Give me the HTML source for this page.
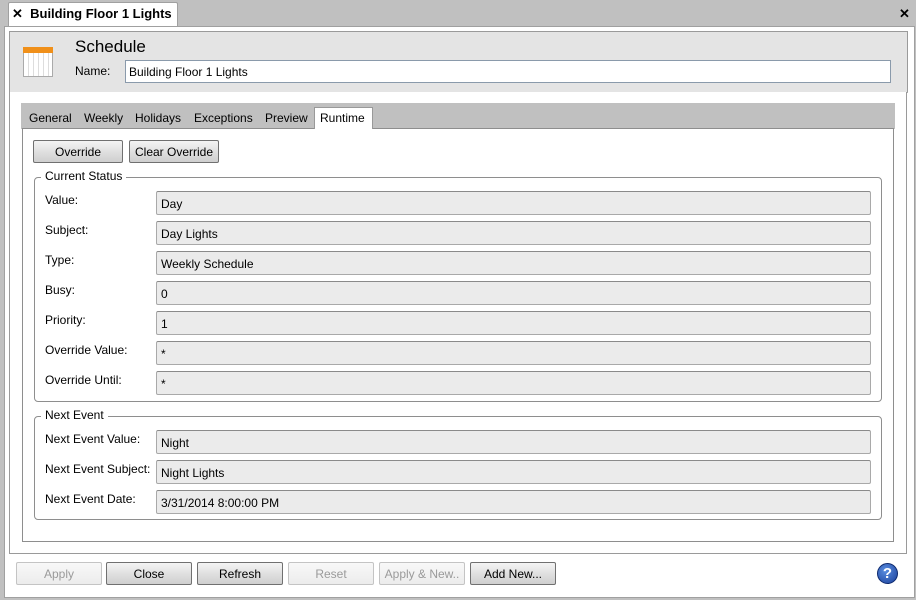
<!DOCTYPE html>
<html><head><style>
*{box-sizing:border-box;margin:0;padding:0}
body{width:916px;height:600px;background:#c0c0c0;font-family:"Liberation Sans",Tahoma,sans-serif;font-size:12px;color:#000;position:relative;overflow:hidden}
.a{position:absolute}
.inp{position:absolute;left:156px;width:715px;height:24px;background:#ebebeb;border:1px solid #a9a9a9;border-top-color:#8a8a8a;border-radius:2px;padding:5px 0 0 4px}
.lbl{position:absolute;left:45px}
.fs{position:absolute;left:34px;width:848px;border:1px solid #8e8e8e;border-radius:4px}
.lg{position:absolute;left:6px;top:-9px;background:#fff;padding:0 4px;font-size:12px}
.btn{position:absolute;height:23px;border:1px solid #707070;border-radius:2px;background:linear-gradient(#f4f4f4,#e0e0e0 50%,#cfcfcf);text-align:center;padding-top:4px}
.dis{color:#9a9a9a;border-color:#c4c4c4;background:linear-gradient(#f8f8f8,#ececec)}
.tab{position:absolute;top:106px}
</style></head><body>
<div class="a" style="left:8px;top:2px;width:170px;height:25px;background:#fff;border:1px solid #a0a0a0;border-bottom:none;border-radius:2px 2px 0 0"></div>
<div class="a" style="left:12px;top:6px;font-weight:bold;font-size:13px">✕&nbsp; Building Floor 1 Lights</div>
<div class="a" style="left:899px;top:6px;font-size:13px;font-weight:bold">✕</div>
<div class="a" style="left:4px;top:26px;width:911px;height:572px;background:#fff;border:1px solid #a0a0a0"></div>
<div class="a" style="left:9px;top:31px;width:899px;height:62px;background:#e4e4e4;border:1px solid #9a9a9a;border-bottom:1px solid #bbb"></div>
<div class="a" style="left:9px;top:92px;width:898px;height:462px;background:#fff;border:1px solid #9a9a9a;border-top:none"></div>
<div class="a" style="left:23px;top:47px;width:30px;height:30px;border:1px solid #aaa;background:repeating-linear-gradient(90deg,#fff 0 4px,#ddd 4px 5px),#fff"></div>
<div class="a" style="left:23px;top:47px;width:30px;height:6px;background:#f0901a"></div>
<div class="a" style="left:75px;top:37px;font-size:17px">Schedule</div>
<div class="a" style="left:75px;top:64px">Name:</div>
<div class="a" style="left:125px;top:60px;width:766px;height:23px;background:#fff;border:1px solid #8a9aab;padding:4px 0 0 3px">Building Floor 1 Lights</div>
<div class="a" style="left:21px;top:103px;width:874px;height:26px;background:#c0c0c0"></div>
<div class="a" style="left:22px;top:128px;width:872px;height:414px;background:#fff;border:1px solid #8e8e8e"></div>
<div class="a" style="left:314px;top:107px;width:59px;height:22px;background:#fff;border:1px solid #999;border-bottom:none"></div>
<div class="tab" style="left:29px;top:111px">General</div>
<div class="tab" style="left:84px;top:111px">Weekly</div>
<div class="tab" style="left:135px;top:111px">Holidays</div>
<div class="tab" style="left:194px;top:111px">Exceptions</div>
<div class="tab" style="left:265px;top:111px">Preview</div>
<div class="tab" style="left:320px;top:111px">Runtime</div>
<div class="btn" style="left:33px;top:140px;width:90px">Override</div>
<div class="btn" style="left:129px;top:140px;width:90px">Clear Override</div>
<div class="fs" style="top:177px;height:225px"><div class="lg">Current Status</div></div>
<div class="lbl" style="top:193px">Value:</div><div class="inp" style="top:191px">Day</div>
<div class="lbl" style="top:223px">Subject:</div><div class="inp" style="top:221px">Day Lights</div>
<div class="lbl" style="top:253px">Type:</div><div class="inp" style="top:251px">Weekly Schedule</div>
<div class="lbl" style="top:283px">Busy:</div><div class="inp" style="top:281px">0</div>
<div class="lbl" style="top:313px">Priority:</div><div class="inp" style="top:311px">1</div>
<div class="lbl" style="top:343px">Override Value:</div><div class="inp" style="top:341px">*</div>
<div class="lbl" style="top:373px">Override Until:</div><div class="inp" style="top:371px">*</div>
<div class="fs" style="top:416px;height:104px"><div class="lg">Next Event</div></div>
<div class="lbl" style="top:432px">Next Event Value:</div><div class="inp" style="top:430px">Night</div>
<div class="lbl" style="top:462px">Next Event Subject:</div><div class="inp" style="top:460px">Night Lights</div>
<div class="lbl" style="top:492px">Next Event Date:</div><div class="inp" style="top:490px">3/31/2014 8:00:00 PM</div>
<div class="btn dis" style="left:16px;top:562px;width:86px">Apply</div>
<div class="btn" style="left:106px;top:562px;width:86px">Close</div>
<div class="btn" style="left:197px;top:562px;width:86px">Refresh</div>
<div class="btn dis" style="left:288px;top:562px;width:86px">Reset</div>
<div class="btn dis" style="left:379px;top:562px;width:86px">Apply &amp; New..</div>
<div class="btn" style="left:470px;top:562px;width:86px">Add New...</div>
<div class="a" style="left:877px;top:563px;width:21px;height:21px;border-radius:50%;background:radial-gradient(circle at 40% 35%,#5a8ee0,#1a3f9a);border:1px solid #0e2a6e;color:#fff;font-weight:bold;font-size:15px;text-align:center;line-height:19px">?</div>
</body></html>
